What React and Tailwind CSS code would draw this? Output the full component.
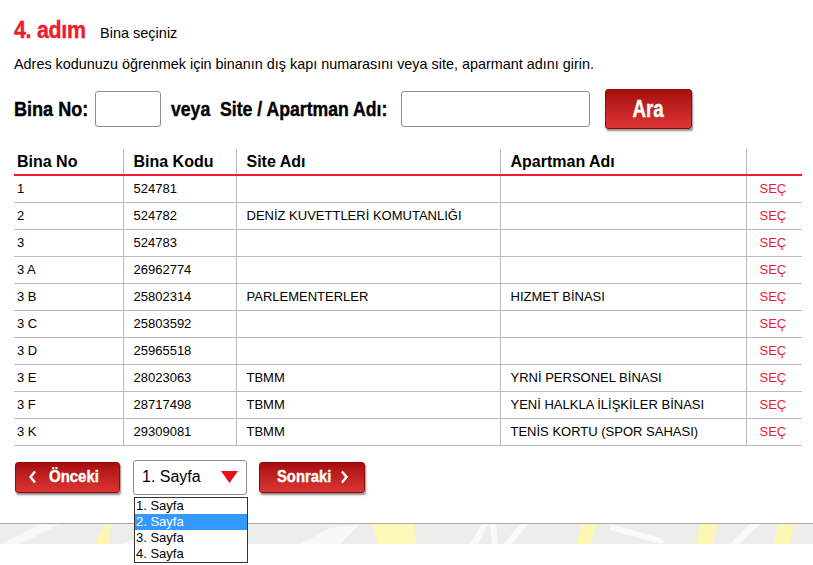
import React, { useState } from "react";

const rows = [
  { no: "1", kod: "524781", site: "", apt: "" },
  { no: "2", kod: "524782", site: "DENİZ KUVETTLERİ KOMUTANLIĞI", apt: "" },
  { no: "3", kod: "524783", site: "", apt: "" },
  { no: "3 A", kod: "26962774", site: "", apt: "" },
  { no: "3 B", kod: "25802314", site: "PARLEMENTERLER", apt: "HIZMET BİNASI" },
  { no: "3 C", kod: "25803592", site: "", apt: "" },
  { no: "3 D", kod: "25965518", site: "", apt: "" },
  { no: "3 E", kod: "28023063", site: "TBMM", apt: "YRNİ PERSONEL BİNASI" },
  { no: "3 F", kod: "28717498", site: "TBMM", apt: "YENİ HALKLA İLİŞKİLER BİNASI" },
  { no: "3 K", kod: "29309081", site: "TBMM", apt: "TENİS KORTU (SPOR SAHASI)" },
];

const pages = ["1. Sayfa", "2. Sayfa", "3. Sayfa", "4. Sayfa"];

// dar kalin yazi (Impact yerine)
const Heavy = ({ children, className }) => (
  <span className={"inline-block whitespace-pre font-bold [-webkit-text-stroke:0.4px_currentColor] " + className}>
    {children}
  </span>
);

// kirmizi buton
const RedButton = ({ children, className }) => (
  <button
    className={
      "flex items-center justify-center rounded-[3px] border border-[#8e0b0c] bg-gradient-to-b from-[#a80c0d] to-[#dc3535] text-white shadow-[1px_2px_2px_rgba(0,0,0,0.45)] " +
      className
    }
  >
    {children}
  </button>
);

const Chevron = ({ left }) => (
  <svg width="9" height="14" viewBox="0 0 9 14">
    <path
      d={left ? "M7 1.5 L2.5 7 L7 12.5" : "M2 1.5 L6.5 7 L2 12.5"}
      fill="none"
      stroke="white"
      strokeWidth="2.4"
    />
  </svg>
);

const MapBand = () => (
  <svg width="100%" height="20" viewBox="0 0 813 20" preserveAspectRatio="none" className="block">
    <rect width="813" height="20" fill="#ededeb" />
    <path d="M0 20 L40 0 L60 0 L20 20 Z" fill="#f7f7f5" />
    <path d="M120 20 L170 2 L230 0 L160 20 Z" fill="#f8f8f6" />
    <path d="M96 20 Q98 8 108 0 L114 0 Q106 8 110 20 Z" fill="#fdf6b4" />
    <path d="M372 0 L414 0 L416 20 L378 20 Z" fill="#fdf7b8" />
    <path d="M300 20 L330 4 L360 0 L340 20 Z" fill="#f8f8f6" />
    <path d="M470 20 L482 0 L488 0 L478 20 Z" fill="#fafaf8" />
    <path d="M490 0 L496 0 L498 20 L492 20 Z" fill="#fafaf8" />
    <path d="M520 0 L528 0 L512 20 L504 20 Z" fill="#fafaf8" />
    <path d="M582 0 L598 0 L590 20 L576 20 Z" fill="#fdf6b4" />
    <path d="M610 0 L660 14 Q668 18 660 20 L610 6 Z" fill="#fafaf8" />
    <path d="M700 0 L718 0 L712 20 L696 20 Z" fill="#fdf6b4" />
    <path d="M730 20 L750 0 L760 0 L740 20 Z" fill="#fafaf8" />
    <path d="M778 0 L794 0 L790 20 L774 20 Z" fill="#fdf6b4" />
  </svg>
);

export default function App() {
  const [page] = useState(0);

  return (
    <div className="relative h-[565px] w-[813px] overflow-hidden bg-white text-black" style={{ fontFamily: '"Liberation Sans", Arial, sans-serif' }}>
      <div className="px-[14px] pt-[15px]">
        {/* baslik */}
        <div className="flex items-baseline">
          <span className="w-[86px]">
            <Heavy className="origin-left scale-x-[0.93] text-[23px] leading-[30px] tracking-[-0.3px] text-[#ee1c2e]">4. adım</Heavy>
          </span>
          <span className="text-[14.5px]">Bina seçiniz</span>
        </div>
        <p className="mt-[11px] text-[14.4px] leading-[16px]">
          Adres kodunuzu öğrenmek için binanın dış kapı numarasını veya site, aparmant adını girin.
        </p>

        {/* arama */}
        <div className="mt-[17px] flex items-center">
          <span className="w-[81px]">
            <Heavy className="origin-left scale-x-[0.86] text-[21px]">Bina No:</Heavy>
          </span>
          <input className="h-[36px] w-[66px] rounded-[3px] border border-[#8f8f8f] bg-white" />
          <span className="ml-[10px] w-[230px]">
            <Heavy className="origin-left scale-x-[0.84] text-[21px]">veya  Site / Apartman Adı:</Heavy>
          </span>
          <input className="h-[36px] w-[189px] rounded-[3px] border border-[#8f8f8f] bg-white" />
          <RedButton className="ml-[15px] h-[40px] w-[87px]">
            <Heavy className="scale-x-[0.78] text-[24px]">Ara</Heavy>
          </RedButton>
        </div>

        {/* tablo */}
        <table className="mt-[20px] w-[788px] table-fixed border-collapse text-[13px]">
          <colgroup>
            <col className="w-[109px]" />
            <col className="w-[113px]" />
            <col className="w-[264px]" />
            <col className="w-[246px]" />
            <col className="w-[56px]" />
          </colgroup>
          <thead>
            <tr className="h-[26px] border-b-2 border-[#ee1c2e] text-left text-[16px] font-bold">
              <th className="pl-[3px] font-bold">Bina No</th>
              <th className="border-l border-[#bbbbbb] pl-[10px] font-bold">Bina Kodu</th>
              <th className="border-l border-[#bbbbbb] pl-[10px] font-bold">Site Adı</th>
              <th className="border-l border-[#bbbbbb] pl-[10px] font-bold">Apartman Adı</th>
              <th className="border-l border-[#bbbbbb]"></th>
            </tr>
          </thead>
          <tbody>
            {rows.map((r) => (
              <tr key={r.kod} className="h-[27px] border-b border-[#bbbbbb]">
                <td className="pl-[3px]">{r.no}</td>
                <td className="border-l border-[#bbbbbb] pl-[10px]">{r.kod}</td>
                <td className="border-l border-[#bbbbbb] pl-[10px]">{r.site}</td>
                <td className="border-l border-[#bbbbbb] pl-[10px]">{r.apt}</td>
                <td className="border-l border-[#bbbbbb] pl-[13px] text-[#ee1c2e]">SEÇ</td>
              </tr>
            ))}
          </tbody>
        </table>

        {/* sayfalama */}
        <div className="mt-[14px] flex items-center">
          <RedButton className="ml-px h-[31px] w-[105px] justify-start pl-[12px]">
            <Chevron left />
            <span className="ml-[12px] w-[56px]">
              <Heavy className="origin-left scale-x-[0.88] text-[17px]">Önceki</Heavy>
            </span>
          </RedButton>
          <div className="relative ml-[13px]">
            <div className="flex h-[35px] w-[114px] items-center justify-between rounded-[3px] border border-[#8f8f8f] bg-white pl-[8px] pr-[8px] text-[16px]">
              <span>{pages[page]}</span>
              <svg width="17" height="12" viewBox="0 0 17 12">
                <path d="M0 0 L17 0 L8.5 12 Z" fill="#e8101a" />
              </svg>
            </div>
            <div className="absolute left-px top-[37px] z-10 w-[114px] border border-[#333] bg-white text-[13px] leading-[16px]">
              {pages.map((p, i) => (
                <div key={p} className={i === 1 ? "bg-[#3399ff] pl-px text-white" : "pl-px"}>
                  {p}
                </div>
              ))}
            </div>
          </div>
          <RedButton className="ml-[12px] h-[31px] w-[106px] justify-start pl-[17px]">
            <span className="w-[62px]">
              <Heavy className="origin-left scale-x-[0.87] text-[17px]">Sonraki</Heavy>
            </span>
            <span className="ml-[1px]">
              <Chevron />
            </span>
          </RedButton>
        </div>
      </div>

      {/* alt bant */}
      <div className="absolute left-0 top-[523px] w-full border-t border-[#aaaaaa]">
        <MapBand />
      </div>
    </div>
  );
}
